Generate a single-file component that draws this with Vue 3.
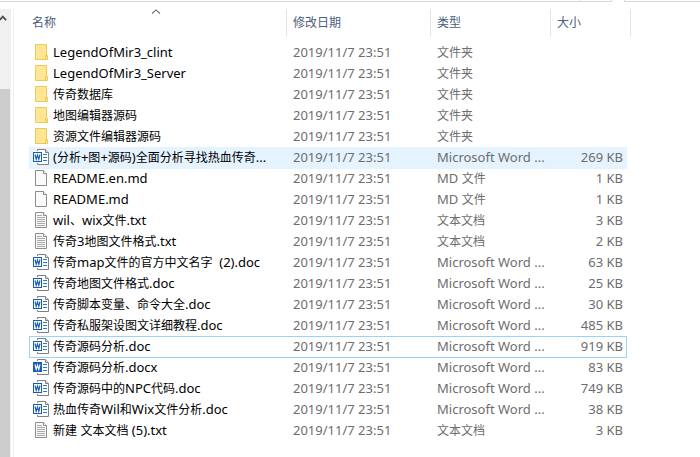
<script setup>
const modified = '2019/11/7 23:51'
const word = 'Microsoft Word ...'

const files = [
  { name: 'LegendOfMir3_clint', icon: 'folder', type: '文件夹', size: '' },
  { name: 'LegendOfMir3_Server', icon: 'folder', type: '文件夹', size: '' },
  { name: '传奇数据库', icon: 'folder', type: '文件夹', size: '' },
  { name: '地图编辑器源码', icon: 'folder', type: '文件夹', size: '' },
  { name: '资源文件编辑器源码', icon: 'folder', type: '文件夹', size: '' },
  { name: '(分析+图+源码)全面分析寻找热血传奇...', icon: 'doc', type: word, size: '269 KB', state: 'hovered' },
  { name: 'README.en.md', icon: 'blank', type: 'MD 文件', size: '1 KB' },
  { name: 'README.md', icon: 'blank', type: 'MD 文件', size: '1 KB' },
  { name: 'wil、wix文件.txt', icon: 'text', type: '文本文档', size: '3 KB' },
  { name: '传奇3地图文件格式.txt', icon: 'text', type: '文本文档', size: '2 KB' },
  { name: '传奇map文件的官方中文名字  (2).doc', icon: 'doc', type: word, size: '63 KB' },
  { name: '传奇地图文件格式.doc', icon: 'doc', type: word, size: '25 KB' },
  { name: '传奇脚本变量、命令大全.doc', icon: 'doc', type: word, size: '30 KB' },
  { name: '传奇私服架设图文详细教程.doc', icon: 'doc', type: word, size: '485 KB' },
  { name: '传奇源码分析.doc', icon: 'doc', type: word, size: '919 KB', state: 'focused' },
  { name: '传奇源码分析.docx', icon: 'docx', type: word, size: '83 KB' },
  { name: '传奇源码中的NPC代码.doc', icon: 'doc', type: word, size: '749 KB' },
  { name: '热血传奇Wil和Wix文件分析.doc', icon: 'doc', type: word, size: '38 KB' },
  { name: '新建 文本文档 (5).txt', icon: 'text', type: '文本文档', size: '3 KB' },
]

// Chinese runs are set one step smaller than the Latin text beside them.
const runs = (text) =>
  text
    .split(/([\x20-\x7e]+)/)
    .filter(Boolean)
    .map((part) => ({ part, chinese: !/^[\x20-\x7e]/.test(part) }))
</script>

<template>
  <div class="explorer">
    <div class="toolbar">
      <div class="address"><span class="refresh"></span></div>
      <div class="search"></div>
    </div>

    <div class="body">
      <div class="scrollbar">
        <button class="scroll-up" type="button" aria-label="Scroll up">
          <svg width="8" height="6" viewBox="0 0 8 6">
            <path d="M-0.5 5.2 L2.8 1.6 L6.1 5.2" fill="none" stroke="#505050" stroke-width="1.8" />
          </svg>
        </button>
        <div class="thumb"></div>
      </div>

      <main class="listing">
        <table>
          <thead>
            <tr>
              <th scope="col" aria-sort="ascending">
                名称
                <svg class="sort" width="10" height="5" viewBox="0 0 10 5">
                  <path d="M1 4.5 L5 0.9 L9 4.5" fill="none" stroke="#6d6d6d" stroke-width="1.1" />
                </svg>
              </th>
              <th scope="col">修改日期</th>
              <th scope="col">类型</th>
              <th scope="col">大小</th>
            </tr>
          </thead>
          <tbody>
            <tr v-for="file in files" :key="file.name" :class="file.state">
              <td class="name">
                <svg class="icon" width="16" height="16" viewBox="0 0 16 16">
                  <template v-if="file.icon === 'folder'">
                    <path d="M2.5 0.5 H13.5 V15.5 H2.5 Z" fill="#ffe594" stroke="#ebcb58" />
                    <path d="M12.5 15.5 V11.5 H14.5 V15.5 Z" fill="#ffe594" stroke="#ebcb58" />
                  </template>
                  <template v-else-if="file.icon === 'blank' || file.icon === 'text'">
                    <path d="M2.5 0.5 H10.5 L13.5 3.5 V15.5 H2.5 Z" fill="#fafafa" stroke="#8c8c8c" />
                    <path d="M10.5 0.5 V3.5 H13.5" fill="#fff" stroke="#8c8c8c" />
                    <path
                      v-if="file.icon === 'text'"
                      d="M4 3.5 H9 M4 5.5 H12 M4 7.5 H12 M4 9.5 H12 M4 11.5 H12 M4 13.5 H12"
                      stroke="#a8a8a8"
                    />
                  </template>
                  <template v-else>
                    <path d="M4.5 0.5 H12.5 L15.5 3.5 V15.5 H4.5 Z" fill="#fff" stroke="#808080" />
                    <path d="M12.5 0.5 V3.5 H15.5" fill="#e8e8e8" stroke="#808080" />
                    <path d="M10 5.5 H14 M10 8.5 H14 M10 11.5 H14" stroke="#2a7bd0" />
                    <rect x="0" y="2" width="10" height="12" fill="#fff" />
                    <rect
                      x="0.5"
                      y="3.5"
                      width="8"
                      height="9"
                      :fill="file.icon === 'docx' ? '#185abd' : '#fff'"
                      stroke="#185abd"
                    />
                    <path
                      d="M2 5.5 L3.2 10.3 L4.5 6 L5.8 10.3 L7 5.5"
                      fill="none"
                      :stroke="file.icon === 'docx' ? '#fff' : '#185abd'"
                      stroke-width="1.2"
                    />
                  </template>
                </svg>
                <span class="label"><span
                  v-for="(run, i) in runs(file.name)"
                  :key="i"
                  :class="{ chinese: run.chinese }"
                >{{ run.part }}</span></span>
              </td>
              <td>{{ modified }}</td>
              <td><span
                v-for="(run, i) in runs(file.type)"
                :key="i"
                :class="{ chinese: run.chinese }"
              >{{ run.part }}</span></td>
              <td class="size">{{ file.size }}</td>
            </tr>
          </tbody>
        </table>
      </main>
    </div>
  </div>
</template>

<style>
body {
  margin: 0;
  background: #fff;
}
</style>

<style scoped>
.explorer {
  display: flex;
  flex-direction: column;
  min-height: 100vh;
  font-family: "Noto Sans", "Noto Sans CJK SC", sans-serif;
  font-size: 13px;
  line-height: 20px;
  color: #6d6d6d;
}

.toolbar {
  display: flex;
  gap: 12px;
  height: 2px;
  margin-bottom: 7px;
}

.address,
.search {
  box-sizing: border-box;
  border: 0 solid #d9d9d9;
  border-bottom-width: 1px;
}

.address {
  display: flex;
  justify-content: flex-end;
  flex: 1;
  border-right-width: 1px;
}

.refresh {
  width: 30px;
  border-left: 1px solid #d9d9d9;
}

.search {
  width: 76px;
  border-left-width: 1px;
}

.body {
  display: flex;
  flex: 1;
  gap: 2px;
}

.scrollbar {
  display: flex;
  flex-direction: column;
  width: 11px;
  background: #f0f0f0;
}

.scroll-up {
  display: flex;
  height: 80px;
  padding: 6px 0 0;
  border: 0;
  background: none;
}

.thumb {
  flex: 1;
  margin-right: 1px;
  background: #cdcdcd;
}

.listing {
  flex: 1;
  border-left: 1px solid #f0f0f0;
}

table,
thead,
tbody {
  display: block;
}

tr {
  display: grid;
  grid-template-columns: 258px 144px 120px 76px;
  width: max-content;
  margin: 0 0 -1px 15px;
}

thead tr {
  grid-template-columns: 258px 144px 120px 80px;
  margin-bottom: 6px;
}

th {
  position: relative;
  height: 27px;
  box-sizing: border-box;
  padding: 0 6px;
  border-right: 1px solid #e5e5e5;
  color: #4c607a;
  font-size: 12px;
  font-weight: 400;
  line-height: 27px;
  text-align: left;
}

th:first-child {
  padding-left: 3px;
}

.sort {
  position: absolute;
  top: 0;
  left: calc(50% - 7px);
}

td {
  height: 22px;
  padding: 0 6px;
  white-space: pre;
}

.name {
  display: flex;
  align-items: flex-start;
  gap: 4px;
  padding: 0 4px;
  color: #000;
}

.icon {
  flex: none;
  margin-top: 2px;
}

.chinese {
  font-size: 12px;
}

.size {
  padding-right: 4px;
  text-align: right;
}

.hovered {
  background: #e5f3ff;
}

.focused {
  outline: 1px solid #99d1ff;
  outline-offset: -1px;
}
</style>
